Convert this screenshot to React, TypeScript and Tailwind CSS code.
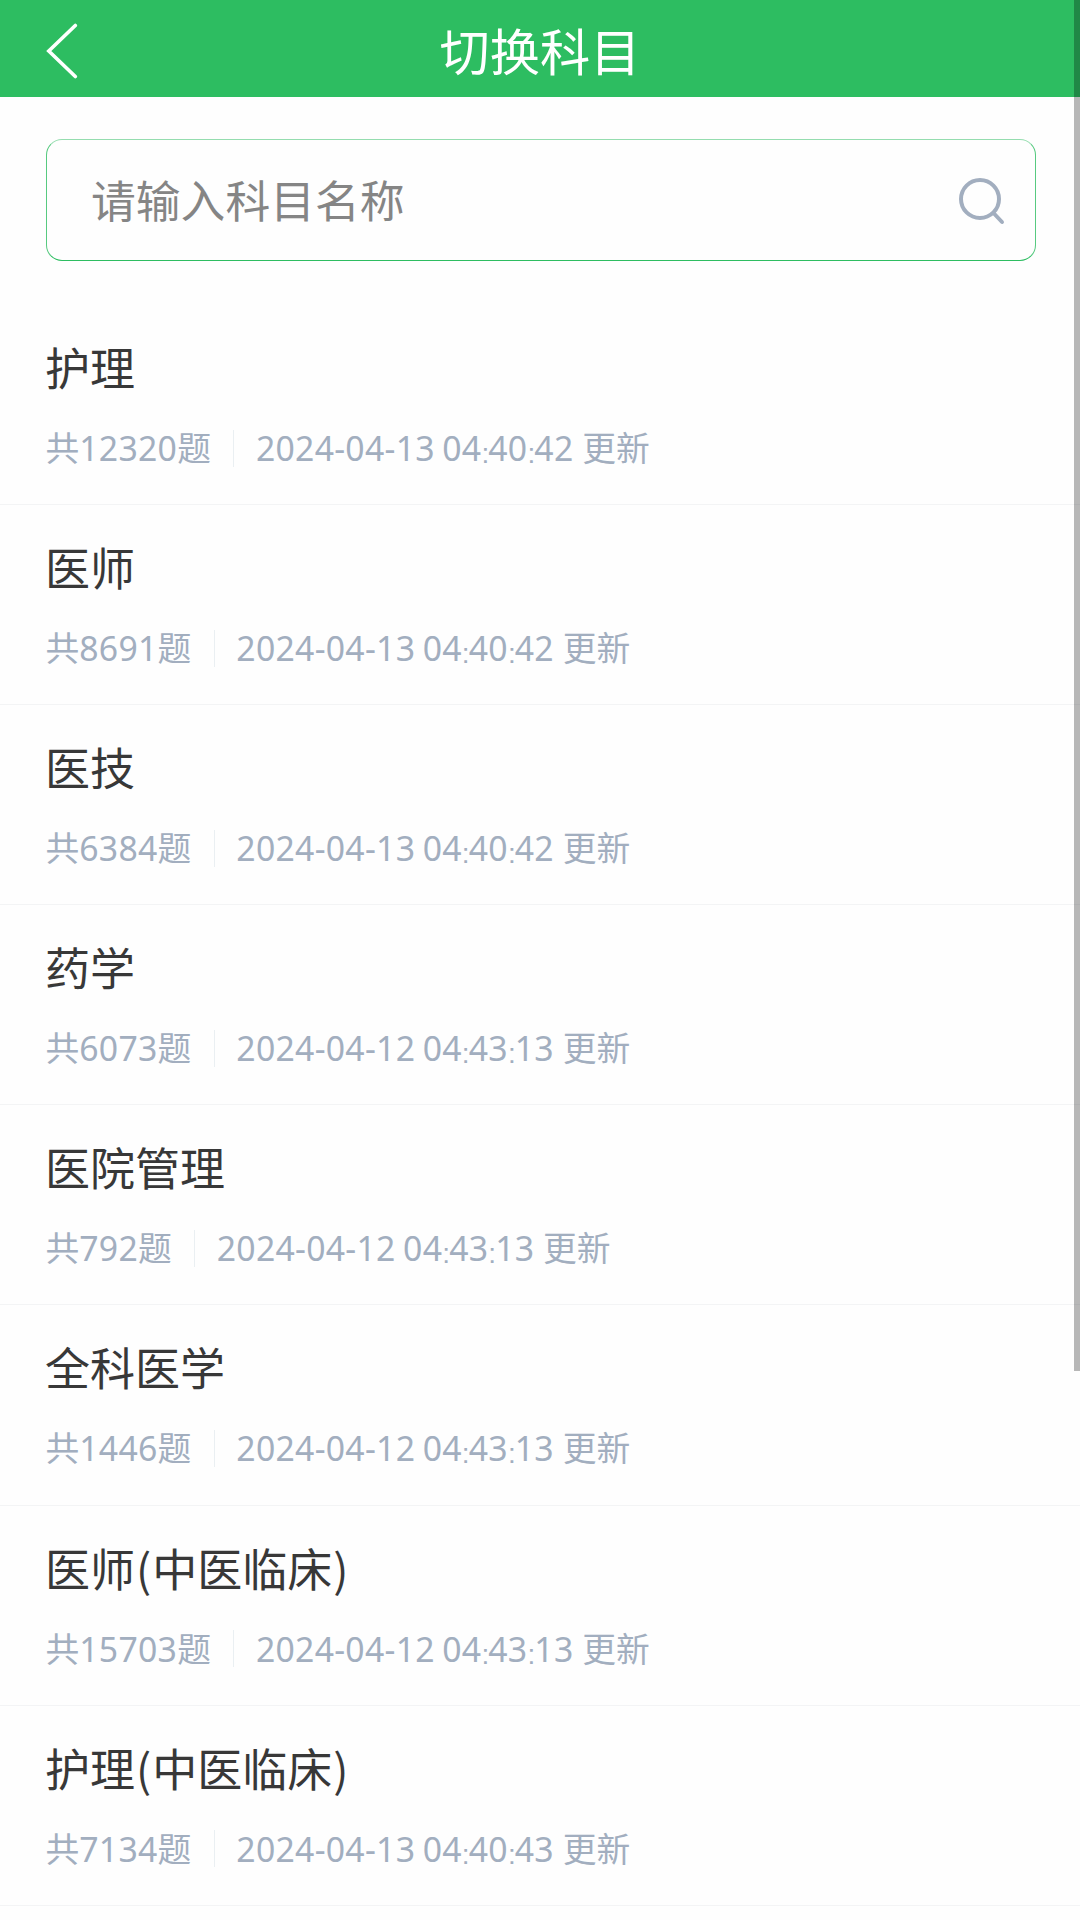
import React from "react";

type Subject = {
  name: string;
  total: number;
  updatedAt: string;
};

const subjects: Subject[] = [
  { name: "护理", total: 12320, updatedAt: "2024-04-13 04:40:42" },
  { name: "医师", total: 8691, updatedAt: "2024-04-13 04:40:42" },
  { name: "医技", total: 6384, updatedAt: "2024-04-13 04:40:42" },
  { name: "药学", total: 6073, updatedAt: "2024-04-12 04:43:13" },
  { name: "医院管理", total: 792, updatedAt: "2024-04-12 04:43:13" },
  { name: "全科医学", total: 1446, updatedAt: "2024-04-12 04:43:13" },
  { name: "医师(中医临床)", total: 15703, updatedAt: "2024-04-12 04:43:13" },
  { name: "护理(中医临床)", total: 7134, updatedAt: "2024-04-13 04:40:43" },
];

const Header = () => (
  <header className="grid h-[97px] shrink-0 grid-cols-[1fr_auto_1fr] items-center bg-[#2dbd61] text-white">
    <button type="button" aria-label="返回" className="pt-[5px] pl-[46px]">
      <svg width="32" height="56" viewBox="0 0 32 56" fill="none">
        <path
          d="M29.3 2.5 L2.8 28 L29.3 53.5"
          stroke="currentColor"
          strokeWidth="3.6"
          strokeLinecap="round"
        />
      </svg>
    </button>
    <h1 className="pt-[6px] text-[50.2px] leading-[72px]">切换科目</h1>
    <div />
  </header>
);

const SearchBox = () => (
  <div className="mr-[44px] ml-[46px] mt-[42px] flex h-[122px] items-center rounded-[16px] border border-[#2dbd61]/80 border-t-[#2dbd61]/50 border-b-[#2dbd61] pt-[2px] pr-[30px] pl-[44px]">
    <input
      type="text"
      placeholder="请输入科目名称"
      className="min-w-0 flex-1 text-[44.8px] leading-[66px] outline-none placeholder:text-[#858585]"
    />
    <svg width="46" height="48" viewBox="0 0 46 48" fill="none" className="text-[#a2aebf]">
      <circle cx="21" cy="22" r="19" stroke="currentColor" strokeWidth="4" />
      <path d="M34.5 36 L43 45" stroke="currentColor" strokeWidth="4" strokeLinecap="round" />
    </svg>
  </div>
);

const UpdateTime = ({ value }: { value: string }) => (
  <span className="tracking-[0.27px] [word-spacing:-1.6px]">
    {value.split(":").map((part, index) => (
      <React.Fragment key={index}>
        {index > 0 && (
          <span className="align-[-1.5px] font-['Liberation_Sans',sans-serif] text-[28px] leading-none tracking-[-0.9px]">
            :
          </span>
        )}
        {part}
      </React.Fragment>
    ))}
  </span>
);

const SubjectRow = ({ subject }: { subject: Subject }) => (
  <li className="h-[200.1px] border-b border-[#f3f4f5] px-[45px] pt-[29px]">
    <h2 className="font-['Noto_Sans_CJK_SC',sans-serif] text-[45px] leading-[66px] text-[#383838]">
      {subject.name.split(/([()])/).map((part, index) =>
        part === "(" || part === ")" ? (
          <span key={index} className="pl-[1px] tracking-[1px]">
            {part}
          </span>
        ) : (
          part
        )
      )}
    </h2>
    <div className="mt-[24px] flex items-center pl-[0.5px] text-[33.75px] leading-[48px] text-[#a2aebf]">
      <span>
        共<span className="tracking-[0.27px]">{subject.total}</span>题
      </span>
      <span className="mr-[21.5px] ml-[22.5px] h-[37px] w-px bg-[#eaeff2]" />
      <span>
        <UpdateTime value={subject.updatedAt} /> 更新
      </span>
    </div>
  </li>
);

const App = () => {
  return (
    <div className="relative flex h-[1920px] w-[1080px] flex-col overflow-hidden bg-[#fefefe] font-['Noto_Sans','Noto_Sans_CJK_SC',sans-serif]">
      <Header />
      <SearchBox />
      <ul className="mt-[44px]">
        {subjects.map((subject) => (
          <SubjectRow key={subject.name} subject={subject} />
        ))}
      </ul>
      {/* scrollbar thumb */}
      <div className="absolute top-0 right-0 h-[1371px] w-[6px] bg-black/28" />
    </div>
  );
};

export default App;
